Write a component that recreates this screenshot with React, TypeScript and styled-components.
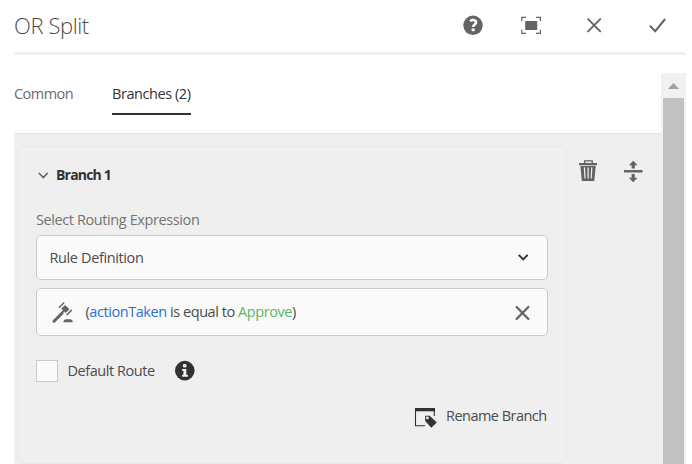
import React from "react";
import styled, { createGlobalStyle } from "styled-components";

const Global = createGlobalStyle`
  * { box-sizing: border-box; }
  body { margin: 0; background: #fff; overflow: hidden; }
`;

const Page = styled.div`
  width: 692px;
  height: 464px;
  padding: 0 6px 0 14px;
  display: flex;
  flex-direction: column;
  overflow: hidden;
  background: #fff;
  font-family: "Open Sans", "Noto Sans", sans-serif;
  font-size: 14.5px;
  color: #4b4b4b;
`;

const Text = styled.span<{ $size?: number; $spacing?: number; $weight?: number; $color?: string }>`
  display: block;
  white-space: nowrap;
  line-height: 20px;
  font-size: ${(p) => p.$size ?? 14.5}px;
  letter-spacing: ${(p) => p.$spacing ?? -0.44}px;
  font-weight: ${(p) => p.$weight ?? 400};
  color: ${(p) => p.$color ?? "#4b4b4b"};
`;

const Header = styled.header`
  flex: none;
  height: 55px;
  display: flex;
  justify-content: space-between;
  border-bottom: 3px solid #f0f0f0;
`;

const Title = styled.div`
  padding-top: 15px;
`;

const Actions = styled.div`
  display: grid;
  grid-template-columns: 20px 20px 20px 20px;
  column-gap: 43px;
  padding: 15px 18px 0 0;
  margin-right: 1px;
`;

const Body = styled.div`
  flex: 1;
  display: flex;
  min-height: 0;
`;

const Main = styled.main`
  width: 647px;
  display: flex;
  flex-direction: column;
`;

const Tabs = styled.nav`
  height: 78px;
  flex: none;
  display: flex;
  align-items: flex-start;
  padding-top: 29px;
`;

const Tab = styled.div<{ $width: number; $active?: boolean }>`
  width: ${(p) => p.$width}px;
  height: 31px;
  border-bottom: 2px solid ${(p) => (p.$active ? "#323232" : "transparent")};
`;

const Panel = styled.section`
  flex: 1;
  display: flex;
  border-top: 1px solid #e4e4e4;
  background: #efefef;
  padding: 12px 0 0 3px;
`;

const Card = styled.div`
  width: 550px;
  height: 318px;
  padding: 0 18px;
  border: 1px solid #e8e8e8;
  border-radius: 5px;
`;

const CardHead = styled.div`
  display: flex;
  gap: 6px;
  align-items: center;
  padding-top: 17px;
  height: 38px;
`;

const FieldLabel = styled.div`
  margin-top: 25px;
  height: 25px;
`;

const Field = styled.div<{ $height: number }>`
  height: ${(p) => p.$height}px;
  width: 512px;
  display: flex;
  align-items: center;
  justify-content: space-between;
  padding: 0 13px 0 12.5px;
  border: 1px solid #cacaca;
  border-radius: 5px;
  background: #fafafa;
  margin-bottom: 8px;
`;

const Rule = styled.div`
  display: flex;
  align-items: center;
  gap: 11px;
`;

const Var = styled.span`
  color: #2d6fd6;
`;

const Value = styled.span`
  color: #5db568;
`;

const CheckRow = styled.div`
  display: flex;
  align-items: center;
  margin-top: 24px;
  height: 22px;
`;

const Box = styled.div`
  width: 22px;
  height: 22px;
  border: 1px solid #cacaca;
  background: #fafafa;
  margin-right: 9.5px;
`;

const CheckLabel = styled.div`
  width: 107.5px;
`;

const Rename = styled.div`
  display: flex;
  align-items: center;
  padding-left: 378px;
  gap: 9px;
  margin-top: 23px;
`;

const Tools = styled.div`
  display: flex;
  gap: 25px;
  padding: 14px 0 0 11px;
`;

const Scrollbar = styled.div`
  width: 25px;
  margin-top: 18px;
  background: #f1f1f1;
  display: flex;
  flex-direction: column;
  align-items: center;
`;

const ScrollArrow = styled.div`
  height: 25px;
  width: 25px;
  flex: none;
`;

const Thumb = styled.div`
  width: 21px;
  flex: 1;
  background: #c1c1c1;
`;

const Icon = styled.svg`
  display: block;
  flex: none;
  overflow: visible;
`;

export default function App() {
  return (
    <>
      <Global />
      <Page>
        <Header>
          <Title>
            <Text $size={22} $weight={300} $spacing={-0.4}>OR Split</Text>
          </Title>
          <Actions>
            <Icon width="20" height="20" viewBox="-5 0 20 20">
              <circle cx="10" cy="10.3" r="9.7" fill="#646464" />
              <path d="M7.2 6.2C8.7 4.2 13 4.7 13 7.4C13 9.6 10.3 9.4 10.2 12" fill="none" stroke="#fff" strokeWidth="2.5" />
              <rect x="8.6" y="13.4" width="3.2" height="2.9" rx=".8" fill="#fff" />
            </Icon>
            <Icon width="20" height="20" viewBox="0 0 20 20">
              <path d="M.8 6V2.4H5M15 2.4H19.4V6M19.4 14.7V18.3H15M5 18.3H.8V14.7" fill="none" stroke="#646464" strokeWidth="1.2" />
              <rect x="4.2" y="6" width="12" height="9" fill="#646464" />
            </Icon>
            <Icon width="20" height="20" viewBox="0 0 20 20">
              <path d="M4.1 4.1L16.2 16.4M16.2 4.1L4.1 16.4" stroke="#646464" strokeWidth="1.9" strokeLinecap="round" />
            </Icon>
            <Icon width="20" height="20" viewBox="0 0 20 20">
              <path d="M3.4 11.3L8.2 16.2L17.7 4.5" fill="none" stroke="#646464" strokeWidth="2" strokeLinecap="round" />
            </Icon>
          </Actions>
        </Header>
        <Body>
          <Main>
            <Tabs>
              <Tab $width={98}>
                <Text $color="#6b6b6b" $spacing={-0.55}>Common</Text>
              </Tab>
              <Tab $width={79} $active>
                <Text $color="#323232">Branches (2)</Text>
              </Tab>
            </Tabs>
            <Panel>
              <Card>
                <CardHead>
                  <Icon width="14" height="14" viewBox="0 0 14 14">
                    <path d="M3.2 5.3L7.3 9.5L11.4 5.3" fill="none" stroke="#646464" strokeWidth="1.6" strokeLinecap="round" />
                  </Icon>
                  <Text $size={14} $weight={700} $color="#323232" $spacing={-0.8}>Branch 1</Text>
                </CardHead>
                <FieldLabel>
                  <Text $color="#747474" $spacing={-0.4}>Select Routing Expression</Text>
                </FieldLabel>
                <Field $height={45}>
                  <Text $spacing={-0.38}>Rule Definition</Text>
                  <Icon width="22" height="20" viewBox="0 0 22 20">
                    <path d="M7.2 7.4L11.2 11.4L15.2 7.4" fill="none" stroke="#323232" strokeWidth="1.9" strokeLinecap="round" />
                  </Icon>
                </Field>
                <Field $height={48}>
                  <Rule>
                    <Icon width="25" height="24" viewBox="0 -0.5 25 24">
                      <g stroke="#646464" fill="none" strokeLinecap="round">
                        <path d="M4 20.8L12.2 12.5" strokeWidth="3" />
                        <path d="M9.4 6.8L13.7 2.5M17 14.2L21.3 9.9" strokeWidth="1.5" />
                      </g>
                      <path d="M11.3 8.1L15.1 4.5L19.4 8.7L15.7 12.4L14.3 11L12.5 12L11.7 11.2L12.7 9.5ZM13.5 21.8V20.4L15.2 18.7H21L22.7 20.4V21.8Z" fill="#646464" />
                    </Icon>
                    <Text>
                      (<Var>actionTaken</Var> is equal to <Value>Approve</Value>)
                    </Text>
                  </Rule>
                  <Icon width="22" height="22" viewBox="0 0 22 22">
                    <path d="M4.6 6L16.4 18M16.4 6L4.6 18" stroke="#646464" strokeWidth="2.3" strokeLinecap="round" />
                  </Icon>
                </Field>
                <CheckRow>
                  <Box />
                  <CheckLabel>
                    <Text>Default Route</Text>
                  </CheckLabel>
                  <Icon width="20" height="20" viewBox="0 0 20 20">
                    <circle cx="9.8" cy="9.6" r="9.8" fill="#323232" />
                    <circle cx="9.7" cy="4.7" r="1.9" fill="#efefef" />
                    <path d="M7.1 8H11.3V13.8H12.9V15.8H7.1V13.8H8.4V9.8H7.1Z" fill="#efefef" />
                  </Icon>
                </CheckRow>
                <Rename>
                  <Icon width="23" height="22" viewBox="0 -2 23 22">
                    <path d="M1.5 4V18.8H11M20.3 4V9" fill="none" stroke="#323232" strokeWidth="1.1" />
                    <rect x="1" y="1" width="20" height="3.3" fill="#323232" />
                    <path d="M11.2 8.8H15.7L22.8 15.4L17.3 20.7L11.2 14.1Z" fill="#323232" />
                    <circle cx="13.4" cy="10.9" r="1.4" fill="#efefef" />
                  </Icon>
                  <Text $spacing={-0.53}>Rename Branch</Text>
                </Rename>
              </Card>
              <Tools>
                <Icon width="20" height="22" viewBox="0 0 20 22">
                  <path d="M6.6 3.2V.9H14.2V3.2" fill="none" stroke="#646464" strokeWidth="1.3" />
                  <path d="M1 2.9H19V5.2H1ZM2.4 6H17.7L16.3 21.1H3.8Z" fill="#646464" />
                  <path d="M6.4 7.4L7 18.5M10.1 7.4V18.5M13.8 7.4L13.2 18.5" stroke="#efefef" strokeWidth="1.2" />
                </Icon>
                <Icon width="20" height="22" viewBox="0 0 20 22">
                  <path d="M1 10H19.5V12.4H1ZM10.2.8L14.6 5.3H11.8V8.5H8.6V5.3H5.8ZM10.2 22.2L14.6 17.7H11.8V14H8.6V17.7H5.8Z" fill="#646464" />
                </Icon>
              </Tools>
            </Panel>
          </Main>
          <Scrollbar>
            <ScrollArrow>
              <Icon width="25" height="25" viewBox="0 0 25 25">
                <path d="M7 16L12.5 10L18 16Z" fill="#a0a0a0" />
              </Icon>
            </ScrollArrow>
            <Thumb />
          </Scrollbar>
        </Body>
      </Page>
    </>
  );
}
